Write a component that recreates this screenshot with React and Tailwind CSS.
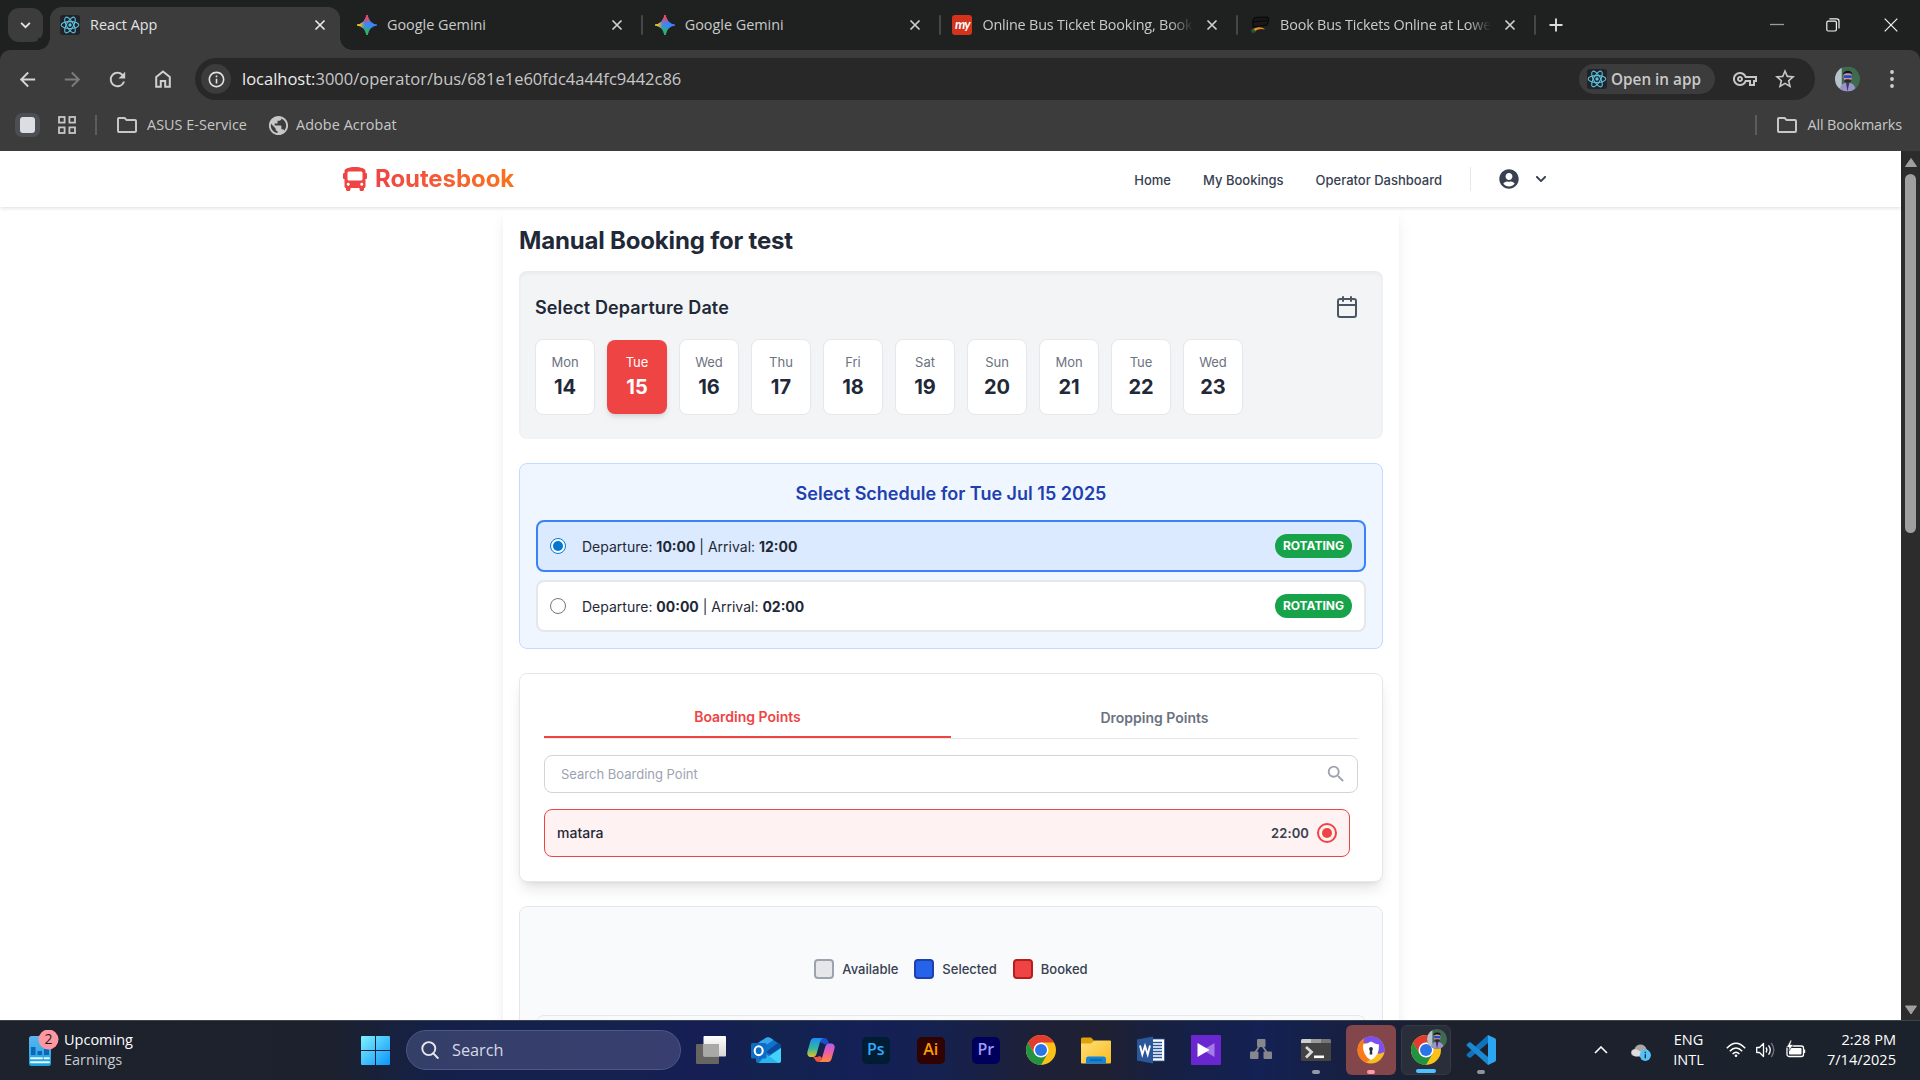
import React from "react";
import { FaBus, FaUserCircle, FaChevronDown } from "react-icons/fa";
import { MdArrowBack, MdArrowForward, MdRefresh, MdInfoOutline, MdOutlineFolder, MdPublic, MdStarBorder, MdSearch, MdOutlineVpnKey } from "react-icons/md";
import { FiCalendar } from "react-icons/fi";

function ReactLogo() {
  return (
    <span className="flex h-5 w-5 shrink-0 items-center justify-center rounded-[3px] bg-[#20232a]">
      <svg viewBox="-12 -12 24 24" className="h-5 w-5" fill="none" stroke="#5cc4de" strokeWidth="1.3">
        <ellipse rx="10.6" ry="4.1" />
        <ellipse rx="10.6" ry="4.1" transform="rotate(60)" />
        <ellipse rx="10.6" ry="4.1" transform="rotate(120)" />
        <circle r="2" fill="#5cc4de" stroke="none" />
      </svg>
    </span>
  );
}

function GeminiLogo({ id }) {
  const star = "M10 0C10.6 5.4 14.6 9.4 20 10C14.6 10.6 10.6 14.6 10 20C9.4 14.6 5.4 10.6 0 10C5.4 9.4 9.4 5.4 10 0Z";
  return (
    <svg viewBox="0 0 20 20" className="h-5 w-5 shrink-0">
      <defs>
        <radialGradient id={id + "r"} cx="9" cy="1" r="8" gradientUnits="userSpaceOnUse"><stop offset="0.3" stopColor="#f0475a" /><stop offset="1" stopColor="#f0475a" stopOpacity="0" /></radialGradient>
        <radialGradient id={id + "y"} cx="0" cy="10" r="8" gradientUnits="userSpaceOnUse"><stop offset="0.3" stopColor="#fbbc04" /><stop offset="1" stopColor="#fbbc04" stopOpacity="0" /></radialGradient>
        <radialGradient id={id + "g"} cx="9" cy="19" r="9" gradientUnits="userSpaceOnUse"><stop offset="0.3" stopColor="#2fb457" /><stop offset="1" stopColor="#2fb457" stopOpacity="0" /></radialGradient>
      </defs>
      {["#3a86fb", `url(#${id}r)`, `url(#${id}y)`, `url(#${id}g)`].map((f) => (
        <path key={f} d={star} fill={f} stroke={f} strokeWidth="1.2" strokeLinejoin="round" />
      ))}
    </svg>
  );
}

function MyLogo() {
  return (
    <span className="flex h-5 w-5 shrink-0 items-center justify-center rounded-[3px] bg-[#d3321d] pb-[2px] font-['Lato'] text-[13px] font-bold leading-none tracking-[-1px] text-white italic">my</span>
  );
}

function BusLogo() {
  return (
    <svg viewBox="0 0 20 20" className="h-5 w-5 shrink-0" fill="none">
      <path d="M3 5L5 2.5L17 2L19 4L17 10L3 12Z" fill="#171817" stroke="#080808" strokeWidth="1.2" />
      <path d="M2 7L17 5.5" stroke="#080808" />
      <path d="M2 15C6 11.5 12 11.5 15 14.5C11 13.4 7 14 4 17Z" fill="#f08a24" />
      <path d="M1 15L4 14L6 17L2 18Z" fill="#17603a" />
    </svg>
  );
}

function Close({ c = "#dcdcdc" }) {
  return (
    <svg viewBox="0 0 12 12" className="h-3 w-3 shrink-0" stroke={c} strokeWidth="1.7"><path d="M1.5 1.5L10.5 10.5M10.5 1.5L1.5 10.5" /></svg>
  );
}

function Tab({ icon, title, fade }) {
  return (
    <div className="mr-[11.7px] flex h-[50px] w-[286px] shrink-0 items-center">
      {icon}
      <span className={"ml-[10px] w-[212px] text-[14.4px] whitespace-nowrap text-[#c9cac9] " + (fade ? "tracking-[-0.18px] [mask-image:linear-gradient(to_right,black_188px,transparent_211px)]" : "")}>{title}</span>
      <span className="ml-3 flex"><Close c="#cfcfcf" /></span>
      <span className="ml-[18px] h-5 w-[2px] rounded bg-[#454746]" />
    </div>
  );
}

function TabStrip() {
  return (
    <div className="flex h-[50px] bg-[#1f2120]">
      <div className="mt-2 ml-2 flex h-[34px] w-[35px] items-center justify-center rounded-[11px] bg-[#3c3c3c]">
        <svg viewBox="0 0 12 8" className="h-[7px] w-[11px]" fill="none" stroke="#e3e3e3" strokeWidth="2.1"><path d="M1 1L6 6L11 1" /></svg>
      </div>
      <div className="relative mt-[7px] ml-[7px] flex h-[43px] w-[290px] items-center rounded-t-[12px] bg-[#3c3c3c] pb-[7px] pl-[10px]">
        <span className="absolute bottom-0 -left-3 h-3 w-3 bg-[radial-gradient(circle_at_0_0,#1f2120_11.5px,#3c3c3c_12px)]" />
        <span className="absolute -right-3 bottom-0 h-3 w-3 bg-[radial-gradient(circle_at_100%_0,#1f2120_11.5px,#3c3c3c_12px)]" />
        <ReactLogo />
        <span className="ml-[10px] w-[213px] text-[14.4px] text-[#e3e3e3]">React App</span>
        <span className="ml-[11px] flex"><Close c="#e8e8e8" /></span>
      </div>
      <div className="flex h-[50px] pl-[17px]">
        <Tab icon={<GeminiLogo id="ga" />} title="Google Gemini" />
        <Tab icon={<GeminiLogo id="gb" />} title="Google Gemini" />
        <Tab icon={<MyLogo />} title="Online Bus Ticket Booking, Book" fade />
        <Tab icon={<BusLogo />} title="Book Bus Tickets Online at Lowe" fade />
      </div>
      <div className="flex h-[50px] items-center">
        <svg viewBox="0 0 14 14" className="ml-px h-[14px] w-[14px]" stroke="#dcdcdc" strokeWidth="1.9"><path d="M7 0.5V13.5M0.5 7H13.5" /></svg>
      </div>
      <div className="ml-auto flex h-[49px] items-center">
        <svg viewBox="0 0 14 14" className="h-[14px] w-[14px]" stroke="#9a9b9a" strokeWidth="1.3"><path d="M0 6.5H14" /></svg>
        <svg viewBox="0 0 14 14" className="ml-[42px] h-[14px] w-[14px]" fill="none" stroke="#f2f2f2" strokeWidth="1.2"><rect x="0.8" y="3.2" width="9.6" height="9.8" rx="1.4" /><path d="M3.4 0.9H10.8Q13 0.9 13 3.1V10.4" /></svg>
        <svg viewBox="0 0 14 14" className="mr-[22px] ml-[44px] h-[14px] w-[14px]" stroke="#f2f2f2" strokeWidth="1.2"><path d="M0.7 0.7L13.3 13.3M13.3 0.7L0.7 13.3" /></svg>
      </div>
    </div>
  );
}

function Avatar({ className }) {
  return (
    <svg viewBox="0 0 26 26" className={className}>
      <defs><clipPath id="av"><circle cx="13" cy="13" r="13" /></clipPath></defs>
      <g clipPath="url(#av)">
        <rect width="26" height="26" fill="#3e6b50" />
        <rect width="7" height="26" fill="#b9c2cb" />
        <path d="M5 26C5 19 8 17 13 17S21 19 22 26Z" fill="#9a93c9" />
        <path d="M11.5 17L13 26L14.8 17Z" fill="#3b3468" />
        <ellipse cx="13.2" cy="10.5" rx="4.4" ry="6" fill="#c99a86" />
        <path d="M8.6 8.5C8 3 18.6 3 17.9 8.5C16 6.5 11 6.5 8.6 8.5Z" fill="#15171b" />
        <rect x="9" y="9" width="8.6" height="3" rx="1.3" fill="#2746d8" />
        <path d="M9.5 14C11 13 15.5 13 17 14C17 18 9.5 18 9.5 14Z" fill="#33272a" />
      </g>
    </svg>
  );
}

function Toolbar() {
  return (
    <div className="bg-[#1f2120]">
      <div className="h-[101px] rounded-t-[10px] bg-[#3c3c3c]">
        <div className="flex h-[58px] items-center text-[#c7c7c7]">
          <MdArrowBack className="ml-4 h-[23px] w-[23px] text-[#d5d5d5]" />
          <MdArrowForward className="ml-[22px] h-[23px] w-[23px] text-[#7c7c7c]" />
          <MdRefresh className="ml-[22px] h-[23px] w-[23px] text-[#d0d0d0]" />
          <svg viewBox="0 0 16 18" className="ml-[26px] h-[18px] w-[16px]" fill="none" stroke="#d0d0d0" strokeWidth="2"><path d="M1.2 7L8 1.5L14.8 7V16.8H10.2V11H5.8V16.8H1.2Z" /></svg>
          <div className="ml-[24px] flex h-[42px] w-[1620px] items-center rounded-full bg-[#282828] pl-[6px]">
            <span className="flex h-[30px] w-[30px] items-center justify-center rounded-full bg-[#3c3c3c]"><MdInfoOutline className="h-[19px] w-[19px] text-[#e3e3e3]" /></span>
            <span className="ml-[11px] text-[16.5px] text-[#c7c7c7]"><span className="text-[#ececec]">localhost:</span>3000/operator/bus/681e1e60fdc4a44fc9442c86</span>
            <span className="ml-auto flex h-[30px] w-[136px] items-center rounded-full bg-[#3c3c3c] pl-2"><ReactLogo /><span className="ml-1 text-[15.3px] font-semibold text-[#c9c9c9]">Open in app</span></span>
            <MdOutlineVpnKey className="ml-[18px] h-[24px] w-[24px]" />
            <MdStarBorder className="mr-[18px] ml-[16px] h-[24px] w-[24px]" />
          </div>
          <Avatar className="ml-5 h-[26px] w-[25px]" />
          <svg viewBox="0 0 4 18" className="ml-[30px] h-[18px] w-1" fill="#cfcfcf"><circle cx="2" cy="2" r="1.9" /><circle cx="2" cy="9" r="1.9" /><circle cx="2" cy="16" r="1.9" /></svg>
        </div>
        <div className="flex h-[34px] items-center text-[14.4px] text-[#c7c7c7]">
          <span className="ml-[15px] flex h-[24px] w-[25px] items-center justify-center rounded-[7px] bg-[#4b4e52]"><span className="h-4 w-[15px] rounded-[3px] bg-[#dcdde2]" /></span>
          <svg viewBox="0 0 18 18" className="ml-[18px] h-[18px] w-[18px]" fill="none" stroke="#c7c7c7" strokeWidth="1.8"><rect x="1" y="1" width="5.6" height="5.6" /><rect x="11.4" y="1" width="5.6" height="5.6" /><rect x="1" y="11.4" width="5.6" height="5.6" /><rect x="11.4" y="11.4" width="5.6" height="5.6" /></svg>
          <span className="ml-[19px] h-5 w-[2px] bg-[#5c5c5c]" />
          <MdOutlineFolder className="ml-[18px] h-[24px] w-[24px]" />
          <span className="ml-[8px] w-[101px] tracking-[0.04px]">ASUS E-Service</span>
          <MdPublic className="ml-[19px] h-[23px] w-[23px]" />
          <span className="ml-[6px] tracking-[0.08px]">Adobe Acrobat</span>
          <span className="ml-auto h-5 w-[2px] bg-[#5c5c5c]" />
          <MdOutlineFolder className="ml-[18px] h-[24px] w-[24px]" />
          <span className="mr-[18px] ml-[8px] tracking-[-0.1px]">All Bookmarks</span>
        </div>
      </div>
    </div>
  );
}

const days = [["Mon", 14], ["Tue", 15], ["Wed", 16], ["Thu", 17], ["Fri", 18], ["Sat", 19], ["Sun", 20], ["Mon", 21], ["Tue", 22], ["Wed", 23]];

function DayCard({ day, date, selected }) {
  return (
    <div className={"flex w-[60px] flex-col items-center rounded-lg pt-3 " + (selected ? "my-px h-[74px] bg-[#ef4444] text-white shadow-md" : "h-[76px] border border-[#e5e7eb] bg-white")}>
      <span className={"text-[13px] leading-5 " + (selected ? "" : "text-[#6b7280]")}>{day}</span>
      <span className={"mt-[1px] text-[20px] leading-7 font-bold " + (selected ? "" : "text-[#1f2937]")}>{date}</span>
    </div>
  );
}

function ScheduleRow({ dep, arr, selected }) {
  return (
    <div className={"flex h-[52px] items-center rounded-lg border-2 px-3 " + (selected ? "border-[#3b82f6] bg-[#dbeafe]" : "border-[#e5e7eb] bg-white")}>
      <span className={"flex h-4 w-4 items-center justify-center rounded-full border bg-white " + (selected ? "border-[#0078d4]" : "border-[#767676]")}>
        {selected && <span className="h-[10px] w-[10px] rounded-full bg-[#0078d4]" />}
      </span>
      <span className="ml-4 text-[14px] text-[#1f2937]">Departure: <b className="font-bold">{dep}</b> | Arrival: <b className="font-bold">{arr}</b></span>
      <span className="ml-auto flex h-6 items-center rounded-full bg-[#16a34a] px-2 text-[12px] font-bold text-white">ROTATING</span>
    </div>
  );
}

function Legend({ box, label }) {
  return (
    <span className="flex items-center gap-2"><span className={"h-5 w-5 rounded border-2 " + box} /><span className="pt-[2px]">{label}</span></span>
  );
}

function Page() {
  return (
    <div className="flex h-[869px] overflow-hidden bg-white font-['Inter']">
      <div className="flex-1">
        <header className="relative z-10 flex h-[56px] items-center bg-white pr-[354px] pl-[343px] shadow-[0_1px_4px_rgba(0,0,0,0.14)]">
          <FaBus className="h-6 w-6 text-[#ef4444]" />
          <span className="ml-2 bg-gradient-to-r from-[#ef4444] to-[#f97316] bg-clip-text text-[24px] leading-8 font-bold tracking-[-0.08px] text-transparent">Routesbook</span>
          <nav className="mt-[3px] ml-auto flex gap-8 text-[13px] font-medium text-[#374151]"><span>Home</span><span>My Bookings</span><span>Operator Dashboard</span></nav>
          <span className="ml-[28px] h-6 w-px bg-[#e5e7eb]" />
          <FaUserCircle className="ml-7 h-5 w-5 text-[#374151]" />
          <FaChevronDown className="ml-4 h-3 w-3 text-[#374151]" />
        </header>
        <main className="ml-[503px] h-[820px] w-[896px] bg-white p-4 shadow-lg">
          <h1 className="h-8 text-[24px] leading-[35px] font-bold tracking-[-0.18px] text-[#1f2937]">Manual Booking for test</h1>

          <section className="mt-4 h-[168px] rounded-lg bg-[#f3f4f6] p-4 shadow-inner">
            <div className="flex h-10 items-center justify-between pr-2">
              <h2 className="text-[18px] font-semibold tracking-[0.12px] text-[#1f2937]">Select Departure Date</h2>
              <FiCalendar className="h-6 w-6 text-[#4b5563]" />
            </div>
            <div className="mt-3 flex gap-3">
              {days.map(([d, n]) => <DayCard key={n} day={d} date={n} selected={n === 15} />)}
            </div>
          </section>

          <section className="mt-6 rounded-lg border border-[#bfdbfe] bg-[#eff6ff] p-4">
            <h3 className="mb-3 text-center text-[18px] leading-7 font-semibold text-[#1e40af]">Select Schedule for Tue Jul 15 2025</h3>
            <div className="space-y-2">
              <ScheduleRow dep="10:00" arr="12:00" selected />
              <ScheduleRow dep="00:00" arr="02:00" />
            </div>
          </section>

          <section className="mt-6 h-[209px] rounded-lg border border-[#e5e7eb] bg-white p-6 shadow-lg">
            <div className="flex h-[41px] border-b border-[#e5e7eb] text-[14px] font-semibold">
              <div className="flex flex-1 items-center justify-center border-b-2 border-[#ef4444] pb-[2px] text-[#ef4444]">Boarding Points</div>
              <div className="flex flex-1 items-center justify-center pb-px text-[#6b7280]">Dropping Points</div>
            </div>
            <div className="mt-4 flex h-[38px] items-center justify-between rounded-lg border border-[#d1d5db] pr-[10px] pl-4 text-[13px] text-[#9ca3af]">
              <span className="pt-px">Search Boarding Point</span><MdSearch className="h-[22px] w-[22px]" />
            </div>
            <div className="mt-4 mr-2 flex h-12 items-center rounded-lg border border-[#ef4444] bg-[#fef2f2] px-3 text-[#374151]">
              <span className="pb-[2px] text-[14px] font-medium text-[#1f2937]">matara</span>
              <span className="ml-auto pt-px text-[13px] font-semibold tracking-[0.1px]">22:00</span>
              <span className="ml-2 flex h-5 w-5 items-center justify-center rounded-full border-2 border-[#ef4444]"><span className="h-[10px] w-[10px] rounded-full bg-[#ef4444]" /></span>
            </div>
          </section>

          <section className="mt-6 h-[400px] rounded-lg border border-[#e5e7eb] bg-[#f9fafb] px-4 pt-[52px]">
            <div className="flex h-5 justify-center gap-4 text-[13px] font-medium text-[#374151]">
              <Legend box="border-[#9ca3af] bg-[#e5e7eb]" label="Available" />
              <Legend box="border-[#1e40af] bg-[#2563eb]" label="Selected" />
              <Legend box="border-[#b91c1c] bg-[#ef4444]" label="Booked" />
            </div>
            <div className="mt-9 h-40 rounded-lg border border-[#e5e7eb]" />
          </section>
        </main>
      </div>
      <div className="flex w-[19px] flex-col items-center bg-[#2c2c2c]">
        <svg viewBox="0 0 12 9" className="mt-[7px] h-[9px] w-3" fill="#9f9f9f"><path d="M6 0.5L11.5 8.5H0.5Z" stroke="#9f9f9f" strokeLinejoin="round" /></svg>
        <span className="mt-[7px] h-[359px] w-[11px] rounded-full bg-[#9f9f9f]" />
        <svg viewBox="0 0 12 9" className="mt-auto mb-[5px] h-[10px] w-3" fill="#9f9f9f"><path d="M6 8.5L11.5 0.5H0.5Z" stroke="#9f9f9f" strokeLinejoin="round" /></svg>
      </div>
    </div>
  );
}

function ChromeLogo({ className }) {
  return (
    <svg viewBox="-15 -15 30 30" className={className}>
      <circle r="15" fill="#fbc116" />
      <path d="M-12.99 -7.5A15 15 0 0 1 12.99 -7.5L0 -7.5L-6.5 3.75Z" fill="#e33b2e" />
      <path d="M-12.99 -7.5A15 15 0 0 0 0 15L6.5 3.75L-6.5 3.75Z" fill="#229342" />
      <circle r="7.5" fill="#fff" />
      <circle r="6" fill="#2b74e8" />
    </svg>
  );
}

function Adobe({ bg, fg, children }) {
  return (
    <span className="flex h-[27px] w-[28px] items-center justify-center rounded-[5px] pb-[2px] font-['Open_Sans'] text-[16px] leading-none font-semibold" style={{ background: bg, color: fg }}>{children}</span>
  );
}

function TaskItem({ children, tile = "", pill = "" }) {
  return (
    <div className="flex w-[55.07px] shrink-0 justify-center">
      <div className={"relative flex h-[50px] w-[50px] items-center justify-center rounded-[6px] " + tile}>
        {children}
        {pill && <span className={"absolute bottom-[1px] left-1/2 h-1 -translate-x-1/2 rounded-full " + pill} />}
      </div>
    </div>
  );
}

function Taskbar() {
  return (
    <div className="flex h-[60px] items-center border-t border-[#3b434d] bg-[linear-gradient(to_right,#1d222c_0px,#1c212d_330px,#14204a_440px,#152250_620px,#161e54_700px,#13234e_770px,#142057_860px,#15214f_940px,#1d2038_1030px,#1f2031_1100px,#162044_1170px,#132154_1260px,#172042_1340px,#1c212d_1430px,#1c222c_1920px)] pb-px text-[14.5px]">
      <svg viewBox="0 0 36 36" className="mb-[4px] ml-[28px] h-9 w-9 shrink-0">
        <defs><linearGradient id="wd" x1="0" y1="0" x2="0" y2="1"><stop offset="0" stopColor="#5cb6f2" /><stop offset="1" stopColor="#18a3dd" /></linearGradient></defs>
        <rect x="1" y="6" width="22" height="30" rx="2.5" fill="url(#wd)" />
        <path d="M3 17h4.500v8H3zM9.500 21H14v4H9.500zM16 19h5v6h-5z" fill="#0d66b8" />
        <path d="M3 28.200h11M16.500 28.200h4.500M3 32.200h18" stroke="#e8f7ff" strokeWidth="1.9" strokeLinecap="round" />
        <circle cx="20.500" cy="9.500" r="10" fill="#ff97a2" />
        <text x="20.500" y="14.300" textAnchor="middle" fontSize="14" fill="#1c1c1c" fontFamily="Open Sans">2</text>
      </svg>
      <div className="w-[297px] pb-px leading-5"><div className="text-white">Upcoming</div><div className="text-[#c9cbd0]">Earnings</div></div>
      <svg viewBox="0 0 29 29" className="h-[29px] w-[29px] shrink-0">
        <defs><linearGradient id="wn" x1="0" y1="0" x2="1" y2="1"><stop offset="0" stopColor="#7ff1fd" /><stop offset="1" stopColor="#0b94fb" /></linearGradient></defs>
        <path d="M0 1Q0 0 1 0H14V14H0ZM15 0H28Q29 0 29 1V14H15ZM0 15H14V29H1Q0 29 0 28ZM15 15H29V28Q29 29 28 29H15Z" fill="url(#wn)" />
      </svg>
      <div className="ml-4 flex h-10 w-[275px] shrink-0 items-center rounded-full border border-[#4d5884] bg-gradient-to-r from-[#343f68] to-[#383f70] pl-[14px]">
        <svg viewBox="0 0 18 18" className="h-[18px] w-[18px]" fill="none" stroke="#e6e8ee" strokeWidth="1.9"><circle cx="7.8" cy="7.6" r="6.5" /><path d="M12.3 12.3L16.8 17" strokeLinecap="round" /></svg>
        <span className="ml-[13px] pt-px text-[16.3px] text-[#d7d9e3]">Search</span>
      </div>
      <div className="ml-[2px] flex">
        <TaskItem>
          <svg viewBox="0 0 30 28" className="h-7 w-[30px]"><defs><linearGradient id="tv" x1="0" y1="0" x2="0" y2="1"><stop offset="0" stopColor="#fff" /><stop offset="1" stopColor="#d5d5d5" /></linearGradient></defs><rect y="8" width="23" height="20" rx="1" fill="#666562" /><rect x="7.5" width="22.5" height="20.5" rx="1" fill="url(#tv)" /><rect x="7.5" y="8" width="15.5" height="12.5" fill="#a9a9a8" /></svg>
        </TaskItem>
        <TaskItem>
          <svg viewBox="0 0 30 26" className="h-[26px] w-[30px]"><path d="M4 8L15 0.8Q17 -0.2 19 0.8L30 8V23.500Q30 26 27.500 26H7.500Q5 26 5 23.500Z" fill="#1272c9" /><path d="M4 8L15 0.8Q17 -0.2 19 0.8L22.500 3L9 12Z" fill="#36a7ee" /><path d="M15 15L27 5.800L30 8V10.500L19 17.500Z" fill="#0a4ba0" /><path d="M8 26L30 11V23.500Q30 26 27.500 26Z" fill="#41d3fa" /><path d="M15 17L27.500 26H8Z" fill="#28b4ee" /><rect y="6" width="15.500" height="15.500" rx="1.500" fill="#0f6cc4" /><ellipse cx="7.700" cy="13.700" rx="4" ry="4.400" fill="none" stroke="#fff" strokeWidth="2.100" /></svg>
        </TaskItem>
        <TaskItem>
          <svg viewBox="0 0 28 26" className="h-[26px] w-[28px]"><defs><linearGradient id="ca" x1="0" y1="0" x2="0" y2="1"><stop offset="0" stopColor="#1c8df2" /><stop offset="0.55" stopColor="#35b7a0" /><stop offset="1" stopColor="#e9c21c" /></linearGradient><linearGradient id="cb" x1="0" y1="0" x2="0" y2="1"><stop offset="0" stopColor="#b05cf0" /><stop offset="0.5" stopColor="#ee5fa0" /><stop offset="1" stopColor="#fb8a3c" /></linearGradient></defs><path d="M12 1H17Q20 1 21 4L22.5 7.5H18L13 5Z" fill="#1950c8" /><path d="M7 1H16Q14 1.5 13 5L9.5 17Q8.5 20 6 20H3Q-0.5 19 0.5 14.5L3.5 4Q4.5 1 7 1Z" fill="url(#ca)" /><path d="M21 25H11Q14 24.5 15 21L18.5 9Q19.5 6.5 22 6.5H25Q28.5 7.5 27.5 11.5L24.5 22Q23.5 25 21 25Z" fill="url(#cb)" /><path d="M6 20H10L13 19L15 21Q14 25 12 25Q8.5 25 7.8 22Z" fill="#f0553c" /></svg>
        </TaskItem>
        <TaskItem><Adobe bg="#001d33" fg="#31a8ff">Ps</Adobe></TaskItem>
        <TaskItem><Adobe bg="#300202" fg="#ff9a00">Ai</Adobe></TaskItem>
        <TaskItem><Adobe bg="#00005b" fg="#9b98ff">Pr</Adobe></TaskItem>
        <TaskItem><ChromeLogo className="h-[30px] w-[30px]" /></TaskItem>
        <TaskItem>
          <svg viewBox="0 0 30 27" className="h-[27px] w-[30px]"><defs><linearGradient id="fo" x1="0" y1="0" x2="1" y2="1"><stop offset="0" stopColor="#ffe07a" /><stop offset="1" stopColor="#f8bb1d" /></linearGradient></defs><path d="M0 2Q0 0.5 1.5 0.5H10L13 3.5V10H0Z" fill="#e0a20c" /><path d="M0 6.5H10L13.5 3.5H29Q30 3.5 30 4.5V25.5Q30 26.5 29 26.5H1Q0 26.5 0 25.5Z" fill="url(#fo)" /><path d="M5 26.5V22Q5 19.5 7.5 19.5H22.5Q25 19.5 25 22V26.5Z" fill="#1183d8" /><path d="M9 23H21" stroke="#0b5ba5" strokeWidth="1.2" /></svg>
        </TaskItem>
        <TaskItem>
          <svg viewBox="0 0 28 28" className="h-7 w-7"><rect x="14" y="3" width="13.5" height="22" fill="#fff" stroke="#2b579a" strokeWidth="0.8" /><path d="M16 6.5H25M16 9.5H25M16 12.5H25M16 15.5H25M16 18.5H25M16 21.5H25" stroke="#2b579a" strokeWidth="1.3" /><path d="M0 3.5L16 0.5V27.5L0 24.5Z" fill="#2b579a" /><path d="M3 9.5L5.3 18.5L8 10L10.7 18.5L13 9.5" fill="none" stroke="#fff" strokeWidth="1.9" /></svg>
        </TaskItem>
        <TaskItem>
          <svg viewBox="0 0 30 30" className="h-[30px] w-[30px]"><rect width="30" height="30" rx="1" fill="#6a27cf" /><path d="M23.5 8V22L12 15Z" fill="#a47ae4" /><path d="M6.5 8V22L18.5 15Z" fill="#fff" /></svg>
        </TaskItem>
        <TaskItem>
          <svg viewBox="0 0 22 22" className="mb-[2px] h-[22px] w-[22px]" fill="#85878c"><path d="M11 6L4 16M11 6L18 16" stroke="#85878c" strokeWidth="1.8" /><rect x="7" y="1" width="8.5" height="8" rx="1" /><rect y="13.5" width="8.5" height="7.5" rx="1" /><rect x="13.5" y="13.5" width="8.5" height="7.5" rx="1" /></svg>
        </TaskItem>
        <TaskItem pill="w-2 bg-[#9398a8]">
          <svg viewBox="0 0 30 22" className="h-[22px] w-[30px]"><rect width="30" height="22" rx="1.5" fill="#434343" /><path d="M0 4V1.5Q0 0 1.5 0H10V4Z" fill="#cfcfcf" /><path d="M10 0H20V4H10Z" fill="#9c9c9c" /><path d="M20 0H28.5Q30 0 30 1.5V4H20Z" fill="#767676" /><path d="M5 8L10.5 13L5 18.5" fill="none" stroke="#d8d8d8" strokeWidth="2.8" /><path d="M13 17.8H23" stroke="#fff" strokeWidth="2.6" /></svg>
        </TaskItem>
        <TaskItem tile="bg-[#83464b]" pill="w-2 bg-[#ff9aa5]">
          <svg viewBox="-14 -14 28 28" className="h-7 w-7"><circle r="13.5" fill="#f9bc1f" /><path d="M-12 -6.5A13.5 13.5 0 0 1 13.3 2L8 4L-4 -7Z" fill="#7a50f0" /><path d="M-7 -11.5A13.5 13.5 0 0 0 -5 12.5L0 9L-8 -2Z" fill="#f77a1c" /><path d="M0 -8.5Q4 -6 8 -5.5Q8.5 6 0 10Q-8.5 6 -8 -5.5Q-4 -6 0 -8.5Z" fill="#fff" /><circle cy="-1" r="1.9" fill="#2b2b3a" /><path d="M-1 0H1L1.4 4.5H-1.4Z" fill="#2b2b3a" /></svg>
        </TaskItem>
        <TaskItem tile="border border-[#343947] bg-[#2a2d3a]" pill="w-5 bg-[#4cc2ff]">
          <ChromeLogo className="h-[30px] w-[30px]" />
          <Avatar className="absolute top-[3px] right-[3px] h-5 w-5" />
        </TaskItem>
        <TaskItem pill="w-2 bg-[#8f9297]">
          <svg viewBox="0 0 30 30" className="h-[30px] w-[30px]"><path d="M22 0L29 3.3Q30 4 30 5V25Q30 26 29 26.7L22 30Z" fill="#2aa6f2" /><path d="M22 8V0L1 19Q0 20 1 21L3 22.5Q4 23 4.8 22.4Z" fill="#0f73bd" /><path d="M22 22V30L1 11Q0 10 1 9L3 7.5Q4 7 4.8 7.6Z" fill="#1b88d0" /></svg>
        </TaskItem>
      </div>
      <div className="ml-auto flex items-center pr-6 text-white">
        <svg viewBox="0 0 14 8" className="h-2 w-[14px]" fill="none" stroke="#fff" strokeWidth="1.6"><path d="M1 7L7 1L13 7" /></svg>
        <svg viewBox="0 0 20 17" className="mt-1 ml-[23px] h-[17px] w-5"><path d="M4 12Q0 12 0 8.5Q0 5.5 3.5 5Q5 0.5 9.5 0.5Q14 0.5 15.5 5Q18 6 18 9V12Z" fill="#a8a8a8" /><path d="M2 11Q0 9 1 7Q3 4.5 6 5.5L12 9V12.5H4Z" fill="#dedede" /><circle cx="14.3" cy="11.3" r="5.6" fill="#55c3fa" /><path d="M14.3 10.3V14.3M14.3 7.8V9.2" stroke="#12222e" strokeWidth="1.3" /></svg>
        <div className="ml-[22px] w-[31px] pb-px text-center leading-5"><div>ENG</div><div>INTL</div></div>
        <svg viewBox="0 0 20 16" className="ml-[22px] h-4 w-5" fill="none" stroke="#fff" strokeWidth="1.5"><path d="M0.8 6.2Q10 -3.8 19.2 6.2M3.8 9.3Q10 2.8 16.2 9.3M6.6 12Q10 8.5 13.4 12" /><circle cx="10" cy="13.8" r="1.3" fill="#fff" stroke="none" /></svg>
        <svg viewBox="0 0 20 16" className="ml-[10px] h-4 w-5" fill="none" stroke="#fff" strokeWidth="1.3"><path d="M0.7 5.5H3.5L7.5 1.5V14.5L3.5 10.5H0.7Z" strokeLinejoin="round" /><path d="M10 5.5Q11.8 8 10 10.5M12.5 3.3Q16 8 12.5 12.7" /><path d="M15.3 1Q20.3 8 15.3 15" stroke="#6e737c" /></svg>
        <svg viewBox="0 0 20 18" className="mb-[2px] ml-[10px] h-[18px] w-5"><rect x="1" y="6" width="16.5" height="10.5" rx="2" fill="none" stroke="#fff" strokeWidth="1.3" /><rect x="3" y="8" width="12.5" height="6.5" rx="0.8" fill="#fff" /><path d="M18.3 9.5V13" stroke="#fff" strokeWidth="1.8" /><path d="M4.5 0L0.5 7.5H3L2.2 12L7.5 4.5H4.5L6 0Z" fill="#fff" stroke="#1c222c" strokeWidth="0.7" /></svg>
        <div className="ml-[19px] w-[71px] pb-px text-right leading-5 tracking-[0.05px] whitespace-nowrap"><div>2:28 PM</div><div>7/14/2025</div></div>
      </div>
    </div>
  );
}

export default function App() {
  return (
    <div className="h-[1080px] w-[1920px] overflow-hidden bg-white font-['Open_Sans',sans-serif]">
      <TabStrip />
      <Toolbar />
      <Page />
      <Taskbar />
    </div>
  );
}
